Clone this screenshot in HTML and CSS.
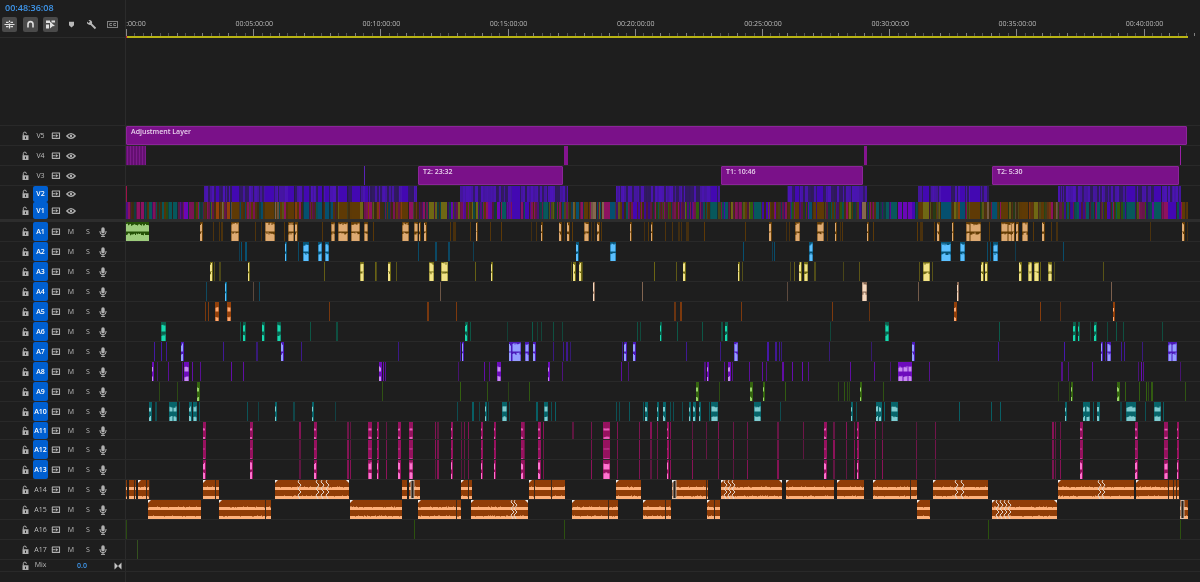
FILE: index.html
```html
<!DOCTYPE html>
<html lang="en">
<head>
<meta charset="utf-8">
<title>Timeline</title>
<link rel="stylesheet" href="styles.css">
</head>
<body>
<svg class="sprite" aria-hidden="true">
  <symbol id="lock" viewBox="0 0 10 10"><path d="M2.500 4.300h6v4.700h-6zM5 5.700v2h1v-2z" fill="currentColor" fill-rule="evenodd"/><path d="M3.300 4.500V2.600a1.500 1.500 0 0 1 3 0v.4" fill="none" stroke="currentColor" stroke-width="1"/></symbol>
  <symbol id="sync" viewBox="0 0 10 10"><path d="M1 2h4.500M1 4.700h3.500M1 7.400h4.500M1.300 2v5.400M5.500 2h3v5.400h-3" fill="none" stroke="currentColor" stroke-width="1.100"/><path d="M4.800 3 7.300 4.700 4.800 6.400z" fill="currentColor"/></symbol>
  <symbol id="eye" viewBox="0 0 10 10"><path d="M.8 5Q5 .4 9.200 5 5 9.600.8 5z" fill="none" stroke="currentColor" stroke-width="1.300"/><circle cx="5" cy="5" r="1.200" fill="currentColor"/></symbol>
  <symbol id="mic" viewBox="0 0 10 10"><rect x="3.300" y=".3" width="3.400" height="6.200" rx="1.700" fill="currentColor"/><path d="M2 4v1a3 2.700 0 0 0 6 0V4M5 7.500v2M3 9.400h4" fill="none" stroke="currentColor" stroke-width="1"/></symbol>
</svg>
<main class="timeline">
  <header class="top">
    <div class="tools">
      <button class="timecode">00:48:36:08</button>
      <div class="toolbar">
        <button class="tool on" aria-label="Insert as nest"><svg viewBox="0 0 15 15"><path d="M4 5.300h2.500M8.500 5.300H11M2.500 7.500h10M4 9.700h2.500M8.500 9.700H11M7.500 3.500v1.500M7.500 6.500v5" fill="none" stroke="currentColor" stroke-width="1.200"/></svg></button>
        <button class="tool on" aria-label="Snap"><svg viewBox="0 0 15 15"><path d="M5 10.500V7.300a2.500 2.700 0 0 1 5 0v3.200" fill="none" stroke="currentColor" stroke-width="1.600"/></svg></button>
        <button class="tool on" aria-label="Linked selection"><svg viewBox="0 0 15 15"><path d="M3 3.500h4v2.500H3zM8.500 3.500H12v2H8.500zM3 7.500h3v4H3z" fill="currentColor"/><path d="M7 4.500 12 9l-2.500.3L7 11.500z" fill="currentColor"/></svg></button>
        <button class="tool" aria-label="Add marker"><svg viewBox="0 0 15 15"><path d="M5 4.700h5v3.600l-2.500 2.200L5 8.300z" fill="currentColor"/></svg></button>
        <button class="tool" aria-label="Settings"><svg viewBox="0 0 15 15"><path d="M6.500 6.500 11.500 11.500" stroke="currentColor" stroke-width="1.800"/><path d="M3 4.400 4.600 6 6 4.700 4.400 3.100A2.800 2.800 0 0 1 8 6.700 2.800 2.800 0 0 1 3 4.400z" fill="currentColor"/></svg></button>
        <button class="tool dim" aria-label="Captions"><svg viewBox="0 0 15 15"><rect x="2.500" y="4.500" width="10" height="6" fill="none" stroke="currentColor"/><path d="M7 6.500H4.700v2H7M11 6.500H8.700v2H11" fill="none" stroke="currentColor"/></svg></button>
      </div>
    </div>
    <div class="ruler" id="ruler"></div>
  </header>
  <div class="row spacer"><div class="head"></div></div>
  <section id="tracks"></section>
  <div class="row mix">
    <div class="head controls">
      <button class="icon" aria-label="Lock mix"><svg><use href="#lock"/></svg></button>
      <span>Mix</span>
      <button class="gain">0.0</button>
      <button class="icon fit" aria-label="Keyframes"><svg viewBox="0 0 8 8"><path d="M.5.500v7L4 4zM7.500.500v7L4 4z" fill="currentColor"/></svg></button>
    </div>
  </div>
  <div class="row rest"><div class="head"></div></div>
</main>
<script src="timeline.js"></script>
</body>
</html>
```

FILE: styles.css
```css
* { box-sizing: border-box; }
body {
  margin: 0;
  background: #1e1e1e;
  color: #bdbdbd;
  font: 7px/10px "Open Sans", "Noto Sans", sans-serif;
  text-rendering: geometricPrecision;
}
button {
  margin: 0; padding: 0; border: 0;
  background: none; color: inherit;
  font: inherit; cursor: pointer;
}
.sprite { position: absolute; width: 0; height: 0; }
.timeline {
  display: flex; flex-direction: column; min-height: 100vh;
  overflow: hidden; will-change: transform;
}
.top { display: flex; height: 38px; }
.tools {
  flex: none; width: 126px; padding: 3px 5px 0 2px;
  border-right: 1px solid #2b2b2b; border-bottom: 1px solid #2b2b2b;
}
.timecode {
  display: block; padding-left: 3px; color: #3f97ec;
  font-size: 9px; font-weight: 600; line-height: 10px;
}
.toolbar { display: flex; justify-content: space-between; padding-top: 4px; }
.tool { width: 15px; height: 15px; border-radius: 2px; color: #b8b8b8; }
.tool.on { background: #4a4a4a; color: #e0e0e0; }
.tool.dim { color: #808080; }
.tool svg { display: block; width: 15px; height: 15px; }
.ruler { position: relative; flex: 1; padding-top: 29px; overflow: hidden; }
.ruler svg { display: block; width: 100%; height: 9px; }
.mark { position: absolute; top: 20px; transform: translateX(-50%); white-space: nowrap; }
.row { display: flex; }
.head { flex: none; width: 126px; border-right: 1px solid #2b2b2b; }
.spacer { height: 88px; border-bottom: 1px solid #292929; }
.track { border-bottom: 1px solid #292929; height: 20px; }
.track.h18 { height: 18px; }
.track.h16 { height: 16px; border-bottom: 0; }
.track.last-video { height: 20px; border-bottom: 3px solid #2d2d2d; }
.controls {
  display: grid; align-items: center; column-gap: 3px; padding-left: 20px;
  grid-template-columns: 10px 15px 10px 14px 14px 10px;
  justify-items: center;
}
.icon { display: block; height: 10px; color: #b0b0b0; }
.icon svg { display: block; width: 10px; height: 10px; }
.name { width: 15px; height: 100%; border-radius: 2px; font-weight: 500; }
.name.on { background: #005fd0; color: #fff; font-weight: 600; }
.lane { position: relative; flex: 1; min-width: 0; }
.lane svg { display: block; width: 100%; height: 100%; }
.clip {
  position: absolute; top: 0; height: 100%; padding: 0 4px;
  background: #7a1189; border: 1px solid #8b2599; border-radius: 1px;
  color: #e8d2ec; font-weight: 600; text-align: left; line-height: 10px;
  display: flex; align-items: flex-start; white-space: nowrap;
}
.mix { height: 12px; border-bottom: 1px solid #292929; }
.mix .controls { grid-template-columns: 10px 15px 36px 1fr; padding-right: 3px; }
.gain { color: #3f97ec; font-weight: 600; justify-self: end; }
.fit { height: 8px; justify-self: end; color: #c4c4c4; }
.fit svg { width: 8px; height: 8px; }
.rest { flex: 1; }
```

FILE: timeline.js
```js
// Clip notation: "x" thin clip, "x/w" plain clip, "x*w" clip with a waveform.
const START = 126, SPAN = 1074;
const pct = v => (v / SPAN * 100).toFixed(3) + '%';

let seed = 7;
const rnd = () => (seed = (seed * 16807) % 2147483647) / 2147483647;

const C = {
  n: '#5f3a05', t: '#07585c', m: '#8d1260', b: '#4308b2', v: '#6a06b8',
  o: '#6f6814', g: '#2f5d0c', c: '#05506f', r: '#93400a', k: '#85674f'
};
const rect = (x, y, w, h, fill, op = 1) =>
  `<rect x="${x}" y="${y}" width="${w}" height="${h}" fill="${fill}" opacity="${op}"/>`;

function clips(data, dark, light, level, h) {
  let s = '';
  for (const item of data.split(' ')) {
    const lit = item.includes('*');
    const [x, w = 1] = item.split(/[*/]/).map(Number);
    if (!lit) { s += rect(x, 0, w, h, dark, (0.5 + rnd() * 0.45).toFixed(2)); continue; }
    s += rect(x, 0, w + (w < 20 ? 1 : 0), h, dark);
    const half = h / 2;
    let d = '';
    for (const base of [half, h]) {
      for (let i = 0; i < w; i++) {
        const a = half * level * (0.78 + rnd() * 0.32);
        d += `M${x + i + (w > 2 && w < 20 ? 0.5 : 0)} ${base}v${-a.toFixed(1)}h1V${base}z`;
      }
    }
    s += `<path d="${d}" fill="${light}"/>`;
  }
  return s;
}

// Music clips: [x, width, cuts, fades, boxed]
function music(list, h) {
  let s = '';
  for (const [x, w, cuts = [], fades = [], boxed] of list) {
    s += rect(x, 0, w, h, '#8f3d07');
    for (const base of [h / 2 + 0.5, h]) {
      let d = `M${x} ${base}v-3`;
      for (let i = 0; i < w; i++) d += `V${(base - 3 + (rnd() < 0.2 ? (rnd() < 0.5 ? 0.6 : -0.5) : 0)).toFixed(1)}h1`;
      s += `<path d="${d}V${base}z" fill="#fdb07a"/>`;
    }
    for (const c of cuts) s += rect(c, 0, 1, h, '#3d2a1c');
    for (const f of fades) {
      s += `<path d="M${f - 1} 0l-1 2 3 3-3 4 3 3-3 3 2 4" fill="none" stroke="#e0d4cb" stroke-width="1"/>`;
    }
    if (boxed) s += `<rect x="${boxed}" y=".5" width="3" height="${h - 1}" fill="#2a2018" stroke="#d8cfc8" stroke-width=".8"/>`;
    if (w > 9) s += `<path d="M${x} 0h3l-3 3z" fill="#eee"/>`;
    if (fades.length && w > 56 && w < 75) s += `<path d="M${x + w} 0v3l-3-3z" fill="#eee"/>`;
  }
  return s;
}

function strips(ranges, pick, h, low) {
  let s = '';
  for (const [a, b] of ranges) {
    for (let x = a; x < b;) {
      const w = Math.min(b - x, 1 + Math.floor(rnd() * 1.8));
      s += rect(x, 0, w, h, pick(x), (low + rnd() * (1 - low)).toFixed(2));
      x += w;
    }
  }
  return s;
}
function blocks(data, h) {
  return data.split(' ').map(i => {
    const [x, w] = i.slice(1).split('/').map(Number);
    return rect(x, 0, w + 1, h, '#1c1c28', 0.5) + rect(x, 0, w, h, C[i[0]]);
  }).join('');
}

function v2(h) {
  return rect(126, 0, 1, h, '#a01248') +
    strips([[204, 417], [460, 568], [616, 720], [787, 867], [918, 989], [1058, 1181]],
      () => rnd() < 0.4 ? '#331a68' : '#4c14b8', h, 0.8) +
    blocks('b216/3 b232/7 b265/9 b288/6 b304/5 b318/4 b325/4 b339/8 b352/8 b365/3 b402/6 b512/8 b711/6 b795/4 b817/6 b923/6 b941/10 b960/5 b970/10 b1127/8 b1154/7', h);
}
function v1(h) {
  const zones = [[204, 'mtmvmtngt'], [418, 'nnormnktmcn'], [560, 'mvtngmvtmon'], [616, 'nonmckn'],
    [787, 'mvtbmgntomn'], [875, 'nomgvtbn'], [918, 'vttgo'], [1058, 'nonogkmnr'], [1182, 'mvtgbomtn'], [1200, 'nnk']];
  const pick = x => {
    const p = zones.find(z => x < z[0])[1];
    return C[p[Math.floor(rnd() * p.length)]];
  };
  return strips([[126, 1188]], pick, h, 0.4) +
    blocks('m137/3 m141/3 t149/3 t169/3 t173/4 v184/4 r216/3 r227/3 n232/7 n265/9 n288/6 c304/5 c318/4 c325/4 n339/8 n352/8 o360/3 m369/3 ' +
      'n402/6 m409/4 o429/5 o441/6 v497/3 t502/4 b512/8 m521/2 b525/4 t544/4 c576/3 n584/4 k593/3 m604/6 c610/5 b633/4 ' +
      'g696/3 t711/6 t725/3 g750/3 t754/7 n795/4 c809/3 n817/7 k862/4 t876/3 t886/3 t891/6 v898/4 v903/4 v908/4 b912/3 n920/3 o923/6 ' +
      'c941/10 c960/5 n970/10 c992/5 n1001/7 n1022/6 o1034/4 m1051/2 t1086/3 t1097/3 b1107/3 g1117/3 t1127/8 t1154/7 m1164/4 b1168/8 n1182/3', h);
}
function v4(h) {
  let s = rect(126, 0, 20, h, '#641071');
  for (let x = 127; x < 146; x += 3) s += rect(x, 0, 1, h, '#7d1a8c');
  return s + rect(564, 0, 4, h, '#84148f') + rect(864, 0, 3, h, '#84148f') + rect(1180, 0, 1, h, '#9a1fa6');
}

const pink = '203*2 250*2 299/2 314*2 347/2 350 368*3 377*1 386 398*2 409*3 435 437/2 451*1 461 464 468 481*1 494*1 521*2 524 538*2 543 591 603*6 617 639 650/2 657 667*1 670 692 718 733 747 777/2 824*2 833/2 846 854 857*1 875 882 916 935 1052/2 1055 1060 1080*2 1135*2 1164*3 1177*1';

const tracks = [
  { n: 'V5', clips: [[126, 1061, 'Adjustment Layer']] },
  { n: 'V4', draw: v4 },
  { n: 'V3', draw: h => rect(364, 0, 1, h, '#5a22b8'), clips: [[418, 145, 'T2: 23:32'], [721, 142, 'T1: 10:46'], [992, 187, 'T2: 5:30']] },
  { n: 'V2', on: 1, h: 16, cls: 'h16', draw: v2 },
  { n: 'V1', on: 1, h: 17, cls: 'last-video', draw: v1 },
  { n: 'A1', on: 1, draw: h => clips('126*23', '#245006', '#9dcc7c', .75, h) + clips('200*2 213 219 221/2 231*7 255 261 265*9 284 288*5 295*2 322 331*3 338*9 351*8 364*3 373 402*6 414*3 419*1 424*2 450 453/3 470 476*1 490 501 531 536 541*1 559*2 564 567*2 572 584*4 591 594 597*2 601 630*1 644 648 651*1 665 672 678/2 681 686/3 704 745 769*2 786 789 795*4 817*6 827 835*1 840 842 867*1 873 917 920/3 934 937*2 952*1 966*3 970*10 989 1001*6 1008*3 1012*2 1016*2 1022*5 1033 1042*2 1051 1056/2 1150 1182*2 1187', '#633c05', '#deaa72', .85, h) },
  { n: 'A2', on: 1, draw: h => clips('239 241 245/2 285*1 298 303*5 318*3 325*3 418 435/2 448/2 473 576*2 610*5 743 772 774 809*3 941*9 960*4 987 990 993*4 1015 1063', '#065578', '#5cc0ff', .78, h) },
  { n: 'A3', on: 1, draw: h => clips('210*2 214 219/2 248*1 324 360*3 375 376 388*2 396 429*4 441*6 475 491*1 571 573*2 579*2 582 654 676 683*2 738*1 742 790 794 799*2 804*3 814/2 843 859 919 923*6 932 981*2 985*2 1019*2 1028*3 1034*4 1040 1048*3 1054 1103', '#716a14', '#f2e388', .9, h) },
  { n: 'A4', on: 1, draw: h => clips('206 225*1 259', '#066a90', '#5cc0ff', .8, h) + clips('253 440 593*1 642 787 862*4 918 957*1 1111', '#8a6a55', '#f6d9c0', .85, h) },
  { n: 'A5', on: 1, draw: h => clips('205 208 215*3 227*3 329 427/2 456 674/2 680/2 741 832 869 954*2 1040 1060 1113*1', '#93400a', '#ffa870', .42, h) },
  { n: 'A6', on: 1, draw: h => clips('161*4 240 243*2 262*2 277*3 310 336/2 465*2 470 507 532 537 541 553 562 637 640 660*1 677 702 721/2 725*2 830 885*3 999 1073*2 1078*1 1090 1094*2 1107 1116 1123 1162', '#0b5f4c', '#17d9ae', .66, h) },
  { n: 'A7', on: 1, draw: h => clips('154 161 166 181*2 223 256/2 281*2 301 398 460 462*1 509*2 512*8 525*3 533*2 553 563 566/2 570 622 624*2 633*2 686 720 734*3 767/2 775/2 779 781 829 871 912*2 998 1064 1101*1 1105 1107*3 1121 1124 1142 1168*3 1172*4', '#4a18b8', '#949cff', .82, h) },
  { n: 'A8', on: 1, draw: h => clips('152*1 157 168 182 184*4 192 200 231 243 379*2 383 385 458 484 489 497*3 548*1 562 621 628 704/2 707*1 724 728*2 732 749 762 766 782/2 792 802 808 850 874 890 898*4 903*4 908*3 929 1061/2 1068 1092 1138 1141 1143 1180', '#6d0cbc', '#c78cf0', .5, h) },
  { n: 'A9', on: 1, draw: h => clips('159 177 197*2 382 460 487 508 529 696*2 719 750*2 763*1 785 838 844 847 849 860*1 883 1058 1069 1071*1 1117*2 1125 1139 1146 1148 1151/2 1185', '#35650f', '#98d468', .42, h) },
  { n: 'A10', on: 1, draw: h => clips('149*2 155/2 169*3 173*3 179 189*2 193*3 199 247 258 275*1 293/2 312*1 335 457 472/2 479 485*1 488 502*4 509 536/2 544*3 551 555 616 619 629 643 645*2 657*1 663*2 670 673 682 689*1 693*2 699*1 709 711*6 754*6 780 851*1 856 876*2 879*2 884 891*6 959 991 1000 1065*1 1083*2 1086*3 1093 1097*2 1120/2 1126*9 1145 1154*6 1163', '#07646a', '#80ccd0', .5, h) },
  { n: 'A11', on: 1, h: 17, cls: 'h18', draw: h => clips(pink + ' 572/2 706 803', '#96125f', '#e75cb8', .26, h) },
  { n: 'A12', on: 1, draw: h => clips(pink + ' 706 803', '#96125f', '#c93c9a', .12, h) },
  { n: 'A13', on: 1, draw: h => clips(pink, '#96125f', '#ff74d0', .7, h) },
  { n: 'A14', draw: h => music([[126, 1], [129, 7, [134]], [138, 12, [146, 149]], [203, 16, [215]], [275, 74, [], [300, 318, 323, 328]], [402, 5], [409, 11, [], [], 411], [461, 11, [468]], [529, 36, [534, 551]], [616, 25], [672, 36, [706], [], 673], [721, 61, [], [726, 730, 734]], [786, 48], [837, 27], [873, 44, [910]], [933, 55, [], [957, 963]], [1058, 76, [], [1100, 1104]], [1136, 43, [1168, 1173, 1176]]], h) },
  { n: 'A15', draw: h => music([[148, 53], [219, 52, [265]], [350, 52], [418, 43, [456]], [471, 57, [], [513, 516]], [572, 46, [608]], [643, 28, [665]], [707, 13, [714]], [917, 13], [992, 65, [], [998, 1002, 1006, 1010]], [1180, 8, [], [], 1181]], h) },
  { n: 'A16', draw: h => clips('126 414 564 988 1180', '#2f5d0c', '', 0, h) },
  { n: 'A17', draw: h => clips('137', '#3f6a20', '', 0, h) }
];

const icon = (id, label) => `<button class="icon" aria-label="${label}"><svg><use href="#${id}"/></svg></button>`;

document.getElementById('tracks').innerHTML = tracks.map(t => {
  const h = t.h || 19;
  const tail = t.n[0] === 'V'
    ? icon('eye', 'Toggle output ' + t.n)
    : `<button>M</button><button>S</button>${icon('mic', 'Record ' + t.n)}`;
  const labelled = (t.clips || []).map(([x, w, text]) =>
    `<button class="clip" style="left:${pct(x - START)};width:${pct(w)}">${text}</button>`).join('');
  const art = t.draw
    ? `<svg viewBox="${START} 0 ${SPAN} ${h}" preserveAspectRatio="none">${t.draw(h)}</svg>` : '';
  return `<div class="row track ${t.cls || ''}"><div class="head controls">${icon('lock', 'Lock ' + t.n)}` +
    `<button class="name${t.on ? ' on' : ''}">${t.n}</button>${icon('sync', 'Sync lock ' + t.n)}${tail}</div>` +
    `<div class="lane">${art}${labelled}</div></div>`;
}).join('');

// Ruler: a major mark every five minutes, fifteen divisions between.
let ticks = rect(START, 7, 1062, 2, '#b9b414');
const MAJOR = 127.2;
for (let i = 0; i <= 126; i++) {
  const x = Math.round(START + i * MAJOR / 15);
  const big = i % 15 === 0;
  ticks += rect(x, big ? 0 : 4, 1, big ? 7 : 3, big ? '#8a8a8a' : i % 3 ? '#555' : '#808080');
}
ticks += rect(START, 7, 1, 2, '#c0143c');
let marks = '';
for (let m = 0; m <= 40; m += 5) {
  const text = m ? `00:${String(m).padStart(2, '0')}:00:00` : ':00:00';
  marks += `<span class="mark" style="left:${pct(m ? m / 5 * MAJOR + 1 : 10)}">${text}</span>`;
}
document.getElementById('ruler').innerHTML =
  `<svg viewBox="${START} 0 ${SPAN} 9" preserveAspectRatio="none">${ticks}</svg>${marks}`;
```
